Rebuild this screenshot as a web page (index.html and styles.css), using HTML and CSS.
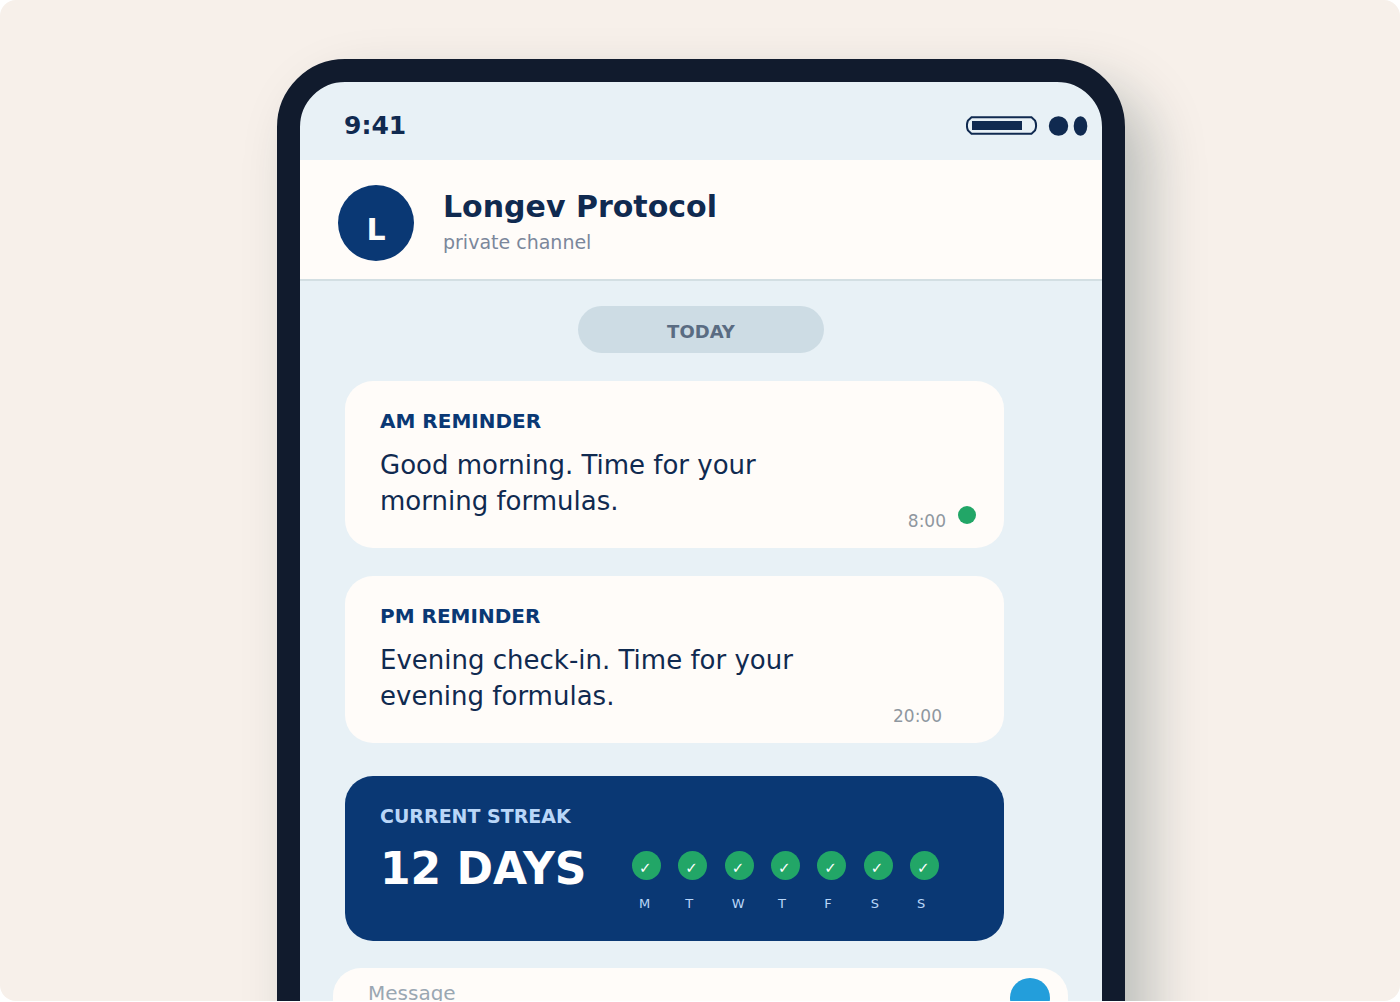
FILE: index.html
```html
<!DOCTYPE html>
<html lang="en">
<head>
  <meta charset="utf-8">
  <meta name="viewport" content="width=device-width, initial-scale=1">
  <title>Longev Protocol</title>
  <link rel="stylesheet" href="styles.css">
</head>
<body>
  <main class="stage">
    <div class="phone">
      <div class="status">
        <span class="clock">9:41</span>
        <svg class="status-icons" width="122" height="20" viewBox="0 0 122 20" aria-hidden="true">
          <path d="M5.500 1.300H65.500L69 4.500C70.300 7.500 70.300 11.500 69 14.500L65.500 17.700H5.500L2 14.500C0.700 11.500 0.700 7.500 2 4.500Z" fill="none" stroke="#102a50" stroke-width="2"/>
          <rect x="6" y="5" width="50" height="9" fill="#102a50"/>
          <ellipse cx="92.500" cy="10" rx="9.700" ry="9.800" fill="#102a50"/>
          <ellipse cx="114.500" cy="10" rx="6.800" ry="9.800" fill="#102a50"/>
        </svg>
      </div>
      <header class="header">
        <div class="avatar" aria-hidden="true">L</div>
        <div class="identity">
          <h1 class="name">Longev Protocol</h1>
          <p class="channel">private channel</p>
        </div>
      </header>
      <div class="date">TODAY</div>
      <div class="chat">
        <article class="message">
          <h2 class="message-title">AM REMINDER</h2>
          <p class="message-text">Good morning. Time for your<br>morning formulas.</p>
          <div class="meta"><time class="time">8:00</time><span class="dot"></span></div>
        </article>
        <article class="message">
          <h2 class="message-title">PM REMINDER</h2>
          <p class="message-text">Evening check-in. Time for your<br>evening formulas.</p>
          <div class="meta meta-pending"><time class="time">20:00</time></div>
        </article>
        <section class="streak">
          <h2 class="streak-title">CURRENT STREAK</h2>
          <div class="streak-row">
            <strong class="streak-count">12 DAYS</strong>
            <ul class="days">
              <li class="day"><span class="check">✓</span><span class="letter">M</span></li>
              <li class="day"><span class="check">✓</span><span class="letter">T</span></li>
              <li class="day"><span class="check">✓</span><span class="letter">W</span></li>
              <li class="day"><span class="check">✓</span><span class="letter">T</span></li>
              <li class="day"><span class="check">✓</span><span class="letter">F</span></li>
              <li class="day"><span class="check">✓</span><span class="letter">S</span></li>
              <li class="day"><span class="check">✓</span><span class="letter">S</span></li>
            </ul>
          </div>
        </section>
      </div>
      <form class="composer">
        <input class="composer-input" type="text" placeholder="Message" aria-label="Message">
        <button class="send" type="button" aria-label="Send"></button>
      </form>
    </div>
  </main>
</body>
</html>
```
FILE: styles.css
```css
* {
  box-sizing: border-box;
}

body {
  display: grid;
  height: 100vh;
  margin: 0;
  padding-bottom: 1px;
  background: #fff;
  color: #102a50;
  font-family: "DejaVu Sans", sans-serif;
}

h1,
h2,
p,
ul {
  margin: 0;
  padding: 0;
}

.stage {
  display: flex;
  align-items: flex-start;
  justify-content: center;
  min-height: 0;
  padding: 59px 0 0 2px;
  overflow: hidden;
  border-radius: 16px;
  background: #f7f0ea;
}

.phone {
  flex: none;
  width: 100%;
  max-width: 848px;
  overflow: hidden;
  border: 23px solid #111b2d;
  border-radius: 68px;
  background: #e8f1f6;
  box-shadow: 24px 28px 56px rgba(17, 45, 50, 0.26);
}

.status {
  display: flex;
  align-items: center;
  justify-content: space-between;
  padding: 29px 14px 19px 44px;
}

.clock {
  font-size: 25px;
  font-weight: 700;
  line-height: 30px;
}

.status-icons {
  display: block;
}

.header {
  display: flex;
  gap: 29px;
  padding: 25px 38px 18px;
  border-bottom: 2px solid #d3dfe3;
  background: #fffcf9;
}

.avatar {
  width: 76px;
  height: 76px;
  padding-top: 7px;
  border-radius: 50%;
  background: #0a3874;
  color: #fffcf9;
  font-size: 30px;
  font-weight: 700;
  line-height: 76px;
  text-align: center;
}

.identity {
  padding-top: 4px;
}

.name {
  font-size: 30px;
  line-height: 36px;
}

.channel {
  margin-top: 5px;
  color: #7b879b;
  font-size: 19px;
  line-height: 24px;
}

.chat {
  padding: 0 98px 27px 45px;
}

.date {
  width: 246px;
  margin: 25px auto 28px;
  padding-top: 5px;
  border-radius: 24px;
  background: #cddce4;
  color: #5a6c82;
  font-size: 18px;
  font-weight: 700;
  line-height: 42px;
  text-align: center;
}

.message {
  display: grid;
  grid-template-columns: 1fr auto;
  row-gap: 14px;
  margin-bottom: 28px;
  padding: 28px 28px 17px 35px;
  border-radius: 28px;
  background: #fffcf9;
}

.message-title {
  grid-column: 1 / -1;
  color: #0a3874;
  font-size: 20px;
  line-height: 24px;
}

.message-text {
  padding-bottom: 12px;
  font-size: 26px;
  line-height: 36px;
}

.meta {
  display: flex;
  align-items: flex-start;
  align-self: end;
  gap: 12px;
}

.meta-pending {
  padding-right: 34px;
}

.time {
  padding-top: 5px;
  color: #8f979f;
  font-size: 17px;
  line-height: 20px;
}

.dot {
  width: 18px;
  height: 18px;
  border-radius: 50%;
  background: #22a667;
}

.streak {
  margin-top: 33px;
  padding: 28px 65px 29px 35px;
  border-radius: 28px;
  background: #0a3874;
}

.streak-title {
  color: #b9d6f8;
  font-size: 19px;
  line-height: 24px;
}

.streak-row {
  display: flex;
  align-items: flex-start;
  justify-content: space-between;
  padding-top: 15px;
}

.streak-count {
  color: #fff;
  font-size: 44px;
  line-height: 52px;
}

.days {
  display: flex;
  justify-content: space-between;
  width: 307px;
  padding-top: 8px;
  list-style: none;
}

.day {
  display: grid;
  gap: 16px;
  width: 29px;
  font-size: 13px;
}

.check {
  height: 29px;
  padding: 3px 0 0 7px;
  border-radius: 50%;
  background: #22a667;
  color: #fff;
  font-size: 15px;
  line-height: 28px;
}

.letter {
  padding-left: 7px;
  color: #b9d6f8;
  line-height: 16px;
}

.composer {
  display: flex;
  align-items: flex-start;
  justify-content: space-between;
  height: 60px;
  margin: 0 34px 40px 33px;
  padding: 10px 18px 10px 35px;
  border-radius: 28px;
  background: #fffcf9;
}

.composer-input {
  flex: 1;
  min-width: 0;
  height: 30px;
  padding: 0;
  border: 0;
  outline: 0;
  background: none;
  color: #102a50;
  font: 20px/30px "DejaVu Sans", sans-serif;
}

.composer-input::placeholder {
  color: #9aa7b2;
  opacity: 1;
}

.send {
  width: 40px;
  height: 40px;
  padding: 0;
  border: 0;
  border-radius: 50%;
  background: #239edb;
}
```
